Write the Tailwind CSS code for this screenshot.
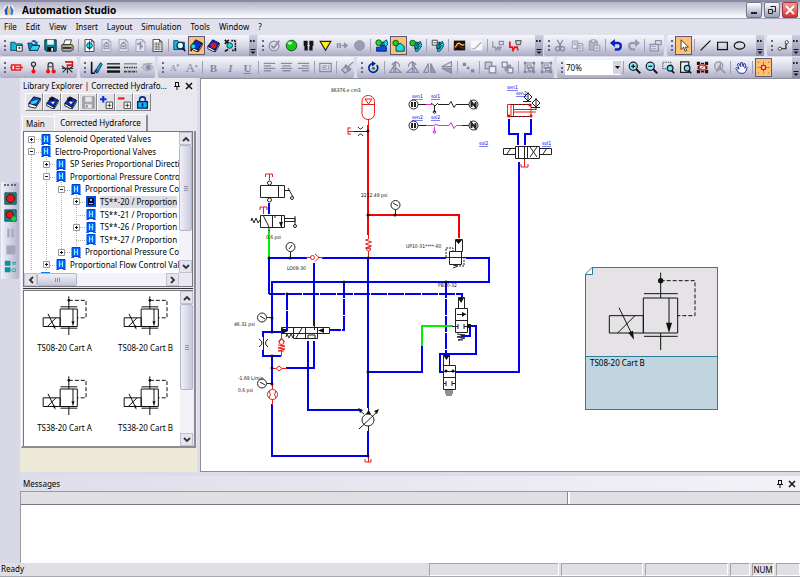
<!DOCTYPE html>
<html lang="en">
<head>
    <meta charset="UTF-8">
    <meta name="viewport" content="width=device-width, initial-scale=1.0">
    <title>Automation Studio</title>
    <script src="https://cdn.jsdelivr.net/npm/@tailwindcss/browser@4"></script>
</head>
<body class="h-screen flex flex-col overflow-hidden bg-[#dcdcea] font-['Noto_Sans','DejaVu_Sans',sans-serif] text-[8px] leading-3 text-black">

    <!-- icon sheet, all on a 16px grid -->
    <svg class="hidden">
        <defs>
            <g id="page"><path d="M2.500 .5h8l3 3v12h-11z" fill="#fff" stroke="#222"/><path d="M10.500 .5v3h3" fill="none" stroke="#222"/></g>
            <g id="pageOff"><path d="M2.500 .5h8l3 3v12h-11z" fill="#e4e4ef" stroke="#9a9ab2"/><path d="M10.500 .5v3h3" fill="none" stroke="#9a9ab2"/></g>
            <g id="book"><path d="M1 9 7 1l8 4-5 9z" fill="#0a2fd0" stroke="#001" /><path d="M1 9v3l8 4 1-2zM10 14l5-9v3l-5 8" fill="#fff" stroke="#001"/></g>
        </defs>
        <symbol id="i-new" viewBox="0 0 16 16"><path d="M1 4h5l1 2h8v8H1z" fill="#12b9dc" stroke="#035"/><path d="M8 8h7v7H8z" fill="#fff" stroke="#222"/><path d="M10 11h3M11.500 9.500v3" stroke="#222"/></symbol>
        <symbol id="i-open" viewBox="0 0 16 16"><path d="M1 5h5l1 2h6v7H3z" fill="#0b8ec8" stroke="#024"/><path d="M3 14l3-6h10l-3 6z" fill="#27dcf2" stroke="#024"/><path d="M5 4c2-4 6-3 7 0l2-1-2 4-3-2 1-1" fill="#0a6cb0"/></symbol>
        <symbol id="i-save" viewBox="0 0 16 16"><path d="M1 1h14v14H3l-2-2z" fill="#0b7f8b" stroke="#012"/><path d="M4 1h8v6H4z" fill="#f2f2f8"/><path d="M4 10h8v5H4z" fill="#111"/><path d="M9 11h2v4H9z" fill="#fff"/></symbol>
        <symbol id="i-print" viewBox="0 0 16 16"><path d="M5 1h8l-2 6H3z" fill="#fff" stroke="#222"/><path d="M1 7h13l1 2v4l-3 2H2l-1-2z" fill="#a9a9a9" stroke="#222"/><path d="M2 11h11" stroke="#222" stroke-width="2"/><path d="M9 9h3" stroke="#fd0"/></symbol>
        <symbol id="i-doc" viewBox="0 0 16 16"><use href="#page"/><circle cx="8" cy="8" r="3.500" fill="#0de4ea" stroke="#034"/><path d="M8 2v12M6 11h4" stroke="#034"/></symbol>
        <symbol id="i-docOff" viewBox="0 0 16 16"><use href="#pageOff"/><path d="M5 12V7l3-3 3 3v5z" fill="none" stroke="#8e8ea8" stroke-width="1.500"/><circle cx="8" cy="9" r="1.500" fill="#8e8ea8"/></symbol>
        <symbol id="i-docOff2" viewBox="0 0 16 16"><use href="#pageOff"/><path d="M8 3v10M4 6h4M8 9h3" stroke="#8e8ea8" stroke-width="2"/></symbol>
        <symbol id="i-sheet" viewBox="0 0 16 16"><use href="#page"/><path d="M4 5h8M4 7h8M4 9h8M4 11h8M4 13h8M6.500 4v10M9.500 4v10" stroke="#777"/></symbol>
        <symbol id="i-find" viewBox="0 0 16 16"><path d="M1 2h5l1 2h7v9H1z" fill="#14b8e0" stroke="#036"/><circle cx="9" cy="8" r="4" fill="#dff" stroke="#124" stroke-width="1.500"/><path d="M12 11l3 4" stroke="#113" stroke-width="2"/></symbol>
        <symbol id="i-book" viewBox="0 0 16 16"><use href="#book"/><circle cx="4" cy="9" r="3" fill="#1ce0e8" stroke="#034"/><path d="M2 12l-1 3" stroke="#111" stroke-width="2"/></symbol>
        <symbol id="i-bookRed" viewBox="0 0 16 16"><use href="#book"/><circle cx="8" cy="8" r="3.500" fill="#e11"/></symbol>
        <symbol id="i-bookCyan" viewBox="0 0 16 16"><path d="M1 9 7 1l8 2-5 9z" fill="#0c49d8" stroke="#001"/><path d="M4 7 13 4l-3 5-7 1z" fill="#1ee0f0"/><path d="M1 9v4l8 2 6-9V3l-5 9z" fill="#fff" stroke="#001"/></symbol>
        <symbol id="i-bookDown" viewBox="0 0 16 16"><use href="#book"/><path d="M4 2h6v4H4z" fill="#111"/><path d="M6 7h5l-2.500 3z" fill="#fff"/></symbol>
        <symbol id="i-var" viewBox="0 0 16 16"><path d="M1 1l5 5M6 1 1 6M5 13l-4 2" stroke="#111" stroke-width="2"/><circle cx="7" cy="8" r="3.500" fill="#15dfd8" stroke="#022"/><path d="M9 2h6M14 2v13M10 14h5" stroke="#111" stroke-width="2" stroke-dasharray="2 1"/></symbol>
        <symbol id="i-check" viewBox="0 0 16 16"><circle cx="7.500" cy="8.500" r="6" fill="#dcdce8" stroke="#8e8ea6" stroke-width="1.500"/><path d="M4 8l3 3 7-9" fill="none" stroke="#85859f" stroke-width="2"/></symbol>
        <symbol id="i-ball" viewBox="0 0 16 16"><circle cx="8" cy="8" r="6.500" fill="#12c81c" stroke="#04400a"/><ellipse cx="6" cy="5" rx="3" ry="2" fill="#aaffa0"/></symbol>
        <symbol id="i-ballOff" viewBox="0 0 16 16"><circle cx="8" cy="8" r="6" fill="#9c9cb4" stroke="#85859f"/></symbol>
        <symbol id="i-pause" viewBox="0 0 16 16"><path d="M2 2h5v5l-1 1 1 1v5H3V9L2 8zM9 2h5v6l-1 1v5H9V9l1-1-1-1z" fill="#151515"/></symbol>
        <symbol id="i-tri" viewBox="0 0 16 16"><path d="M1.500 3h13L8 14z" fill="#ffef17" stroke="#222" stroke-width="1.500"/></symbol>
        <symbol id="i-step" viewBox="0 0 16 16"><path d="M1 5h2v6H1zM4 5h2v6H4zM7 7h3V4l5 4-5 4V9H7z" fill="#8e8ea8"/></symbol>
        <symbol id="i-simBlue" viewBox="0 0 16 16"><path d="M7 4h4v6H7zM9 5l5-4 2 5-5 6H8z" fill="#18dfe6" stroke="#023"/><path d="M2 10h4l2-2h4l2 2v5H2z" fill="#0b4ae0" stroke="#015"/><circle cx="4.500" cy="4.500" r="3.500" fill="#25d92c" stroke="#041"/></symbol>
        <symbol id="i-simOne" viewBox="0 0 16 16"><path d="M5 15V9l5-4 5 4v6z" fill="#18dfe6" stroke="#023"/><circle cx="4.500" cy="5" r="3.500" fill="#25c92c" stroke="#041"/></symbol>
        <symbol id="i-simMany" viewBox="0 0 16 16"><path d="M7 4h4v8H7zM9 6l5-3 2 5-5 7H8z" fill="#18dfe6" stroke="#023"/><path d="M10 8l4-3M10 11l4-3" stroke="#023"/><circle cx="4.500" cy="5" r="3.500" fill="#25c92c" stroke="#041"/></symbol>
        <symbol id="i-boxMany" viewBox="0 0 16 16"><path d="M7 4h4v8H7zM9 6l5-3 2 5-5 7H8z" fill="#18dfe6" stroke="#023"/><path d="M10 8l4-3M10 11l4-3" stroke="#023"/><path d="M1.500 1.500h6v6h-6z" fill="#fff" stroke="#222"/><path d="M3 4.500h3" stroke="#222"/></symbol>
        <symbol id="i-scope" viewBox="0 0 16 16"><path d="M1 2h14v12H1z" fill="#111"/><path d="M2 10c3 0 2-5 5-5s2 4 7 2" fill="none" stroke="#fd0" stroke-width="1.500"/><path d="M2 12l5-5 3 4h4" fill="none" stroke="#e22"/></symbol>
        <symbol id="i-graph" viewBox="0 0 16 16"><path d="M1 2h14v12H1z" fill="#f8f8fc"/><path d="M2 12h4l8-8" fill="none" stroke="#aaa" stroke-width="1.500"/></symbol>
        <symbol id="i-probeOff" viewBox="0 0 16 16"><path d="M1 3v7h3l1 4 2-4h5M7 10l2 4 2-4M9 3h5v4H9z" fill="none" stroke="#9090aa" stroke-width="1.500"/></symbol>
        <symbol id="i-probe" viewBox="0 0 16 16"><path d="M1 3v7h3l1 4 2-4h3l1 4" fill="none" stroke="#e11" stroke-width="2"/><path d="M8 2h7l-1 5H9z" fill="#ccc" stroke="#333"/></symbol>
        <symbol id="i-cut" viewBox="0 0 16 16"><path d="M4 1l5 9M11 1 6 10" stroke="#8585a0" stroke-width="1.500"/><circle cx="4.500" cy="12" r="2.500" fill="none" stroke="#8585a0" stroke-width="1.500"/><circle cx="10.500" cy="12" r="2.500" fill="none" stroke="#8585a0" stroke-width="1.500"/></symbol>
        <symbol id="i-copy" viewBox="0 0 16 16"><path d="M1.500 2.500h7v9h-7zM7.500 5.500h7v9h-7z" fill="#e6e6f0" stroke="#8e8ea8"/><path d="M9 8h4M9 10h4M9 12h4M3 5h4M3 7h3" stroke="#8e8ea8"/></symbol>
        <symbol id="i-paste" viewBox="0 0 16 16"><path d="M1.500 2.500h10v11h-10z" fill="#b5b5c8" stroke="#8e8ea8"/><path d="M4 1h5v3H4zM7.500 7.500h7v7h-7z" fill="#e6e6f0" stroke="#8e8ea8"/><path d="M9 10h4M9 12h4" stroke="#8e8ea8"/></symbol>
        <symbol id="i-undo" viewBox="0 0 16 16"><path d="M4 5h6c5 0 4 8-1 8H6" fill="none" stroke="#0a22b8" stroke-width="3"/><path d="M0 5l6-5v10z" fill="#0a22b8"/></symbol>
        <symbol id="i-redo" viewBox="0 0 16 16"><path d="M12 5H6c-5 0-4 8 1 8h3" fill="none" stroke="#9a9ab0" stroke-width="3"/><path d="M16 5l-6-5v10z" fill="#9a9ab0"/></symbol>
        <symbol id="i-props" viewBox="0 0 16 16"><path d="M1.500 6.500h10v8h-10zM8 6V2h7v5h-3" fill="#e0e0ec" stroke="#8e8ea8" stroke-width="1.500"/><path d="M3 9h6M3 12h6" stroke="#8e8ea8"/></symbol>
        <symbol id="i-arrow" viewBox="0 0 16 16"><path d="M5 1v12l3-3 2 5 2-1-2-4h4z" fill="#fff" stroke="#222"/></symbol>
        <symbol id="i-line" viewBox="0 0 16 16"><path d="M2 14 14 2" stroke="#111" stroke-width="1.500"/></symbol>
        <symbol id="i-rect" viewBox="0 0 16 16"><path d="M2 4h12v9H2z" fill="none" stroke="#111" stroke-width="1.500"/></symbol>
        <symbol id="i-oval" viewBox="0 0 16 16"><ellipse cx="8" cy="8" rx="6.500" ry="4.500" fill="none" stroke="#111" stroke-width="1.500"/></symbol>
        <symbol id="i-link" viewBox="0 0 16 16"><path d="M5 12h6V5" fill="none" stroke="#222" stroke-width="1.500"/><circle cx="3.500" cy="12" r="2" fill="#fff" stroke="#222"/><circle cx="12" cy="4" r="2" fill="#fff" stroke="#222"/></symbol>
        <symbol id="i-cyl" viewBox="0 0 16 16"><path d="M2 5h11v6H2zM6 5v6M6 8h10M0 8h2" fill="#fff" stroke="#f01818" stroke-width="1.700"/></symbol>
        <symbol id="i-pin" viewBox="0 0 16 16"><circle cx="8" cy="4" r="2.500" fill="none" stroke="#333" stroke-width="1.500"/><path d="M8 6v6" stroke="#333" stroke-width="1.500"/><circle cx="8" cy="13" r="2.500" fill="#f01010"/></symbol>
        <symbol id="i-pins" viewBox="0 0 16 16"><path d="M5 13V5c0-4 6-4 6 0v8" fill="none" stroke="#333" stroke-width="1.500"/><path d="M5 7h6" stroke="#333"/><circle cx="5" cy="13" r="2.500" fill="#f01010"/><circle cx="12" cy="13" r="2.500" fill="#f01010"/></symbol>
        <symbol id="i-spider" viewBox="0 0 16 16"><path d="M5 1h9v4H8v3" fill="none" stroke="#f01010" stroke-width="2"/><path d="M1 9h14M2 14l5-5M14 14l-5-5M8 8v7M1 6l4 3M15 6l-4 3" stroke="#333" stroke-width="1.500"/></symbol>
        <symbol id="i-pen" viewBox="0 0 16 16"><path d="M2 1v14h4" fill="none" stroke="#111" stroke-width="2"/><path d="M6 13 13 2l2 2-6 11z" fill="#10b5c9" stroke="#023"/><path d="M4 15l3-5 3 2z" fill="#1028c0"/></symbol>
        <symbol id="i-weights" viewBox="0 0 16 16"><path d="M0 3.500h16" stroke="#111" stroke-width="1.500"/><path d="M0 8h16" stroke="#111" stroke-width="2.500"/><path d="M0 13h16" stroke="#111" stroke-width="3"/></symbol>
        <symbol id="i-dashes" viewBox="0 0 16 16"><path d="M0 3.500h16" stroke="#444"/><path d="M0 8h16" stroke="#333" stroke-width="2" stroke-dasharray="2 1"/><path d="M0 13h16" stroke="#444" stroke-width="2" stroke-dasharray="4 1"/></symbol>
        <symbol id="i-eye" viewBox="0 0 16 16"><path d="M1 8c4-6 10-6 14 0-4 5-10 5-14 0z" fill="#c5c5d5" stroke="#9a9ab2"/><circle cx="9" cy="8" r="3" fill="#8e8ea8"/><path d="M2 4l12-1" stroke="#9a9ab2"/></symbol>
        <symbol id="i-alignL" viewBox="0 0 16 16"><path d="M1 3h14M1 6h9M1 9h14M1 12h9" stroke="#8a8aa4" stroke-width="1.600"/></symbol>
        <symbol id="i-alignC" viewBox="0 0 16 16"><path d="M1 3h14M3 6h10M1 9h14M3 12h10" stroke="#8a8aa4" stroke-width="1.600"/></symbol>
        <symbol id="i-alignR" viewBox="0 0 16 16"><path d="M1 3h14M6 6h9M1 9h14M6 12h9" stroke="#8a8aa4" stroke-width="1.600"/></symbol>
        <symbol id="i-field" viewBox="0 0 16 16"><path d="M1 3h14v10H1z" fill="none" stroke="#8a8aa4" stroke-width="1.500"/><path d="M4 6h6M4 8h4M4 10h6M12 5v6" stroke="#8a8aa4"/></symbol>
        <symbol id="i-brush" viewBox="0 0 16 16"><path d="M15 1 9 7M6 5l6 5-2 2-5-5zM5 7l-4 4 4 4 5-4z" fill="#c2c2d2" stroke="#85859f" stroke-width="1.500"/></symbol>
        <symbol id="i-rotate" viewBox="0 0 16 16"><path d="M7 3a5.500 5.500 0 1 0 5 2" fill="none" stroke="#0a1f9c" stroke-width="2"/><path d="M6 0l5 3-5 4z" fill="#0a1f9c"/><circle cx="8" cy="9" r="2" fill="#1b9c28"/></symbol>
        <symbol id="i-rotL" viewBox="0 0 16 16"><path d="M1 14l5-8v8zM8 14h7L8 8z" fill="none" stroke="#8a8aa4" stroke-width="1.500"/><path d="M6 3c4-3 7 0 7 4M4 4l4-3v5z" fill="none" stroke="#8a8aa4" stroke-width="1.500"/></symbol>
        <symbol id="i-rotR" viewBox="0 0 16 16"><path d="M15 14l-5-8v8zM8 14H1l7-6z" fill="none" stroke="#8a8aa4" stroke-width="1.500"/><path d="M10 3C6 0 3 3 3 7M12 4 8 1v5z" fill="none" stroke="#8a8aa4" stroke-width="1.500"/></symbol>
        <symbol id="i-flipH" viewBox="0 0 16 16"><path d="M1 14 6.500 3v11z" fill="none" stroke="#8a8aa4" stroke-width="1.500"/><path d="M15 14 9.500 3v11z" fill="#9a9ab2" stroke="#8a8aa4" stroke-width="1.500"/></symbol>
        <symbol id="i-flipV" viewBox="0 0 16 16"><path d="M14 1v6L2 7z" fill="none" stroke="#8a8aa4" stroke-width="1.500"/><path d="M14 15V9L2 9z" fill="#9a9ab2" stroke="#8a8aa4" stroke-width="1.500"/></symbol>
        <symbol id="i-nodes" viewBox="0 0 16 16"><path d="M1 2h4v4H1zM6 7h3v3H6zM11 10h4v4h-4z" fill="#85859f"/></symbol>
        <symbol id="i-front" viewBox="0 0 16 16"><path d="M1.500 1.500h8v8h-8z" fill="#c9c9d8" stroke="#85859f" stroke-width="1.500"/><path d="M6.500 6.500h8v8h-8z" fill="#eee" stroke="#85859f" stroke-width="1.500"/></symbol>
        <symbol id="i-back" viewBox="0 0 16 16"><path d="M5 5h7v7H5z" fill="#9a9ab2" stroke="#85859f"/><path d="M1.500 1.500h6v6h-6zM8.500 8.500h6v6h-6z" fill="#eee" stroke="#85859f" stroke-width="1.500"/></symbol>
        <symbol id="i-group" viewBox="0 0 16 16"><path d="M2.500 2.500h11v11h-11zM5 5h5v4H5zM7 8h5v4H7z" fill="none" stroke="#85859f" stroke-width="1.300"/><path d="M1 1h3v3H1zM12 1h3v3h-3zM1 12h3v3H1zM12 12h3v3h-3z" fill="#85859f"/></symbol>
        <symbol id="i-zoomIn" viewBox="0 0 16 16"><circle cx="6.500" cy="6.500" r="5" fill="#8ceef2" stroke="#123" stroke-width="1.500"/><path d="M10 10l5 5" stroke="#111" stroke-width="2.500"/><path d="M4 6.500h5M6.500 4v5" stroke="#112" stroke-width="1.500"/></symbol>
        <symbol id="i-zoomOut" viewBox="0 0 16 16"><circle cx="6.500" cy="6.500" r="5" fill="#8ceef2" stroke="#123" stroke-width="1.500"/><path d="M10 10l5 5" stroke="#111" stroke-width="2.500"/><path d="M4 6.500h5" stroke="#112" stroke-width="1.500"/></symbol>
        <symbol id="i-zoomSel" viewBox="0 0 16 16"><path d="M1 1.500h10v8H1z" fill="none" stroke="#333" stroke-dasharray="2 1"/><circle cx="10" cy="9" r="3.500" fill="#6fe5ea" stroke="#123" stroke-width="1.500"/><path d="M12 12l3 3" stroke="#111" stroke-width="2"/></symbol>
        <symbol id="i-zoomPage" viewBox="0 0 16 16"><path d="M2 1h10v13H2z" fill="#eee" stroke="#222" stroke-width="1.500"/><circle cx="10" cy="9" r="3.500" fill="#6fe5ea" stroke="#123" stroke-width="1.500"/><path d="M12 12l3 3" stroke="#111" stroke-width="2"/></symbol>
        <symbol id="i-zoomAll" viewBox="0 0 16 16"><path d="M1 1h4v4H1zM11 1h4v4h-4zM1 11h4v4H1zM11 11h4v4h-4zM6 2h4v2H6zM6 12h4v2H6zM2 6h2v4H2zM12 6h2v4h-2z" fill="#2a1010"/><path d="M4 5h8v6H4z" fill="#eed" stroke="#c22" stroke-width="1.500"/><path d="M4 11l8-6" stroke="#c22"/></symbol>
        <symbol id="i-zoomOff" viewBox="0 0 16 16"><circle cx="7" cy="6" r="5" fill="#d5d5e2" stroke="#9494ad" stroke-width="1.500"/><path d="M10 10l5 5M4 14l5-9v6" stroke="#9494ad" stroke-width="2" fill="none"/></symbol>
        <symbol id="i-hand" viewBox="0 0 16 16"><path d="M5 15 1 9l1-1 3 2-2-6 2-1 2 4V2h2l1 5 1-4 2 1-1 5 2-2 1 1-2 5-2 2z" fill="#fff" stroke="#1a2f9c" stroke-width="1.200"/></symbol>
        <symbol id="i-snap" viewBox="0 0 16 16"><path d="M1 1h1v1H1zM7.500 1h1v1h-1zM14 1h1v1h-1zM1 7.500h1v1H1zM14 7.500h1v1h-1zM1 14h1v1H1zM7.500 14h1v1h-1zM14 14h1v1h-1z" fill="#a11"/><path d="M8 3v10M3 8h10M5 5l6 6M11 5l-6 6" stroke="#e11"/><circle cx="8" cy="8" r="2.500" fill="#fdd" stroke="#e11" stroke-width="1.500"/></symbol>
        <symbol id="i-saveOff" viewBox="0 0 16 16"><path d="M1 1h14v14H1z" fill="#a8a8a8" stroke="#888"/><path d="M4 1h8v6H4zM4 10h8v5H4z" fill="#e8e8e8"/><path d="M5 11h2v3H5z" fill="#888"/></symbol>
        <symbol id="i-plus" viewBox="0 0 16 16"><path d="M0 4h8M4 0v8" stroke="#0b2ce0" stroke-width="2.500"/><path d="M7.500 7.500h8v8h-8z" fill="#fff" stroke="#222"/><path d="M9 11.500h5M11.500 9v5" stroke="#222"/></symbol>
        <symbol id="i-minus" viewBox="0 0 16 16"><path d="M0 3h8" stroke="#e81515" stroke-width="2.500"/><path d="M7.500 7.500h8v8h-8z" fill="#fff" stroke="#222"/><path d="M9 11.500h5M11.500 9v5" stroke="#222"/></symbol>
        <symbol id="i-lock" viewBox="0 0 16 16"><path d="M4.500 8V4c0-4 7-4 7 0v4" fill="none" stroke="#0a2a8c" stroke-width="2"/><path d="M2 7h12v8H2z" fill="#10b8f0" stroke="#02206c" stroke-width="1.500"/><path d="M8 9v4" stroke="#02206c" stroke-width="2"/></symbol>
        <symbol id="i-valves" viewBox="0 0 10 11"><path d="M1 0h8v10H1zM0 11h3v-1H0zM7 11h3v-1H7z" fill="#0a6cff"/><path d="M1 .5h8v9H1z" fill="none" stroke="#0440d8"/><path d="M3.500 2v6M6.500 2v6M4 5h2" stroke="#8af4ff"/></symbol>
        <symbol id="i-valvesOn" viewBox="0 0 10 11"><path d="M0 0h10v11H0z" fill="#0450e0"/><path d="M2 2h6v7H2z" fill="#0a0a28"/><path d="M4 3h2v2H4zM3 7h4v1H3z" fill="#7ad0ff"/></symbol>
        <symbol id="i-rec" viewBox="0 0 16 16"><path d="M1 1h14v14H1z" fill="#0a8c90" stroke="#044"/><circle cx="8" cy="8" r="5" fill="#f01414" stroke="#500"/></symbol>
        <symbol id="i-recGo" viewBox="0 0 16 16"><path d="M1 1h14v14H1z" fill="#0a8c90" stroke="#044"/><circle cx="7" cy="7" r="4.500" fill="#f01414" stroke="#500"/><circle cx="12" cy="12" r="3" fill="#1fd03a"/></symbol>
        <symbol id="i-bars" viewBox="0 0 16 16"><path d="M4 3h3v11H4zM9 3h3v11H9z" fill="#a9a9c2"/></symbol>
        <symbol id="i-stop" viewBox="0 0 16 16"><path d="M3 3h11v11H3z" fill="#a5a5bf"/></symbol>
        <symbol id="i-tiles" viewBox="0 0 16 16"><path d="M1 1h7v6H1zM1 9h7v6H1z" fill="#0e9298"/><path d="M10 3h5M10 5h5M10 11h4v3h-4z" stroke="#1b8f95" fill="#c7f0f0"/></symbol>
        <symbol id="i-more" viewBox="0 0 8 20"><path d="M1 4l2 1-2 1zM4 4l2 1-2 1z" fill="#111"/><path d="M1.500 4l1 1-1 1M4.500 4l1 1-1 1" fill="none" stroke="#111"/><path d="M1.500 13.500h5" stroke="#111"/><path d="M1.500 15.500h5L4 18z" fill="#111"/></symbol>
        <symbol id="i-cart" viewBox="120 50 270 240">
            <g fill="none" stroke="#111" stroke-width="1">
                <path vector-effect="non-scaling-stroke" d="M127 181h102v52H127zM229 128h103v105H229zM231 115h101M231 243h101M281 52v76M281 233v51M306 128v80M152 233l52-52M156 157l36 74"/>
                <path vector-effect="non-scaling-stroke" d="M281 76h103v105h-52" stroke-dasharray="4 2"/>
            </g>
            <circle cx="281" cy="76" r="8" fill="#111"/>
            <path d="M297 202h18l-9 31zM184 232l14-6 3 27z" fill="#111"/>
        </symbol>
    </svg>

    <header class="flex h-[19px] shrink-0 items-center gap-[7px] border-t-2 border-b border-t-[#8a8aa4] border-b-[#a4a4b8] bg-linear-to-b from-[#b4b4c8] via-[#d8d8e4] to-white pl-[3px] pr-0.5">
        <svg class="size-3" viewBox="0 0 16 16"><circle cx="8" cy="8" r="7.500" fill="#e8eefc"/><path d="M7 1 2 8l1 6 3 1V8z" fill="#2450b8"/><path d="M9 1l5 7-1 6-3 1V8z" fill="#3a78d0"/><path d="M8 2l2 8-2 5-2-5z" fill="#f4c030"/></svg>
        <h1 class="grow text-[10px] font-bold">Automation Studio</h1>
        <div class="flex gap-0.5">
            <button aria-label="Minimize" class="flex h-4 w-4 items-end justify-center rounded-xs border border-[#77778f] bg-linear-to-b from-white to-[#9c9cb8] pb-[3px]"><span class="h-0.5 w-1.5 bg-[#222]"></span></button>
            <button aria-label="Restore" class="flex h-4 w-4 items-center justify-center rounded-xs border border-[#77778f] bg-linear-to-b from-white to-[#9c9cb8]"><svg class="size-2.5" viewBox="0 0 10 10"><path d="M3.500 1.500h5v5h-2M1.500 4.500h4v4h-4z" fill="none" stroke="#222"/></svg></button>
            <button aria-label="Close" class="flex h-4 w-4 items-center justify-center rounded-xs border border-[#a03040] bg-linear-to-b from-[#f09a90] to-[#d03034]"><svg class="size-2.5" viewBox="0 0 10 10"><path d="M1 1l8 8M9 1 1 9" stroke="#fff" stroke-width="1.800"/></svg></button>
        </div>
    </header>

    <nav class="flex h-4 shrink-0 items-center gap-[9px] bg-[#e1e1ed] pl-1">
        <a href="#">File</a><a href="#">Edit</a><a href="#">View</a><a href="#">Insert</a><a href="#">Layout</a><a href="#">Simulation</a><a href="#">Tools</a><a href="#">Window</a><a href="#">?</a>
    </nav>

    <div id="row1" class="flex h-[21px] shrink-0 gap-px"></div>
    <div id="row2" class="mt-px flex h-[21px] shrink-0 gap-[3px]"></div>

    <main class="flex min-h-0 grow">
        <aside class="w-5 shrink-0 bg-[#d8d8e6] pt-[104px]">
            <div id="side" class="mx-px flex flex-col items-center rounded-r-xs bg-linear-to-r from-[#f2f2fa] to-[#b4b4cc] pb-1"></div>
        </aside>

        <div class="flex min-w-0 grow flex-col">
            <div class="flex h-[394px] shrink-0">
                <section class="flex w-[177px] shrink-0 flex-col bg-[#e8e8ee]">
                    <div class="flex h-[15px] shrink-0 items-center gap-1 pl-[3px] pr-1">
                        <h2 class="min-w-0 grow whitespace-nowrap">Library Explorer | Corrected Hydrafo...</h2>
                        <button aria-label="Pin"><svg class="size-2" viewBox="0 0 8 8"><path d="M2.500 0v4M5.500 0v4M2 .5h4M1 4.500h6M4 5v3" stroke="#111"/></svg></button>
                        <button aria-label="Close panel"><svg class="size-2" viewBox="0 0 8 8"><path d="M1 1l6 6M7 1 1 7" stroke="#111" stroke-width="1.500"/></svg></button>
                    </div>
                    <div id="libTools" class="flex h-[18px] shrink-0 pl-[5px]"></div>
                    <div class="flex h-5 shrink-0 items-end pl-0.5 pt-[3px]">
                        <button class="h-[15px] w-8 border-t border-l border-white bg-[#e4e3e8] pl-[3px] text-left">Main</button>
                        <button class="h-[17px] w-[94px] rounded-t-xs border-t border-l border-r-2 border-t-white border-l-white border-r-[#8c8c94] bg-[#ebeaee] text-center">Corrected Hydraforce</button>
                    </div>
                    <div class="mx-px flex h-[317px] shrink-0 flex-col border-r-2 border-b-2 border-l border-[#8c8c94] border-l-white bg-[#e8e8ee] px-px">
                        <div class="grid h-[156px] shrink-0 grid-cols-[1fr_13px] grid-rows-[1fr_13px] border border-[#77777f] bg-white">
                            <div class="relative overflow-hidden pt-px">
                                <svg class="absolute left-0 top-px" width="155" height="140"><path d="M7.500 6v132M22.500 20v118M37.500 45v76M52.500 60v59M8 6.500h10M8 19.500h10M22 31.500h10M22 44.500h10M22 132.500h10M37 57.500h10M37 119.500h10M52 69.500h10M52 82.500h10M52 94.500h10M52 107.500h10M52.500 60v48" fill="none" stroke="#b5b5b5" stroke-dasharray="1 1"/></svg>
                                <ul id="tree" class="relative grid h-[138px] auto-rows-fr"></ul>
                                <span class="absolute bottom-0 left-[17px] h-px w-[9px] bg-[#0a78ff]"></span>
                            </div>
                            <div class="flex flex-col bg-[#f2f2f8]">
                                <button aria-label="Scroll up" class="flex h-[13px] items-center justify-center border border-[#c0c0d4] bg-[#e4e4f0]"><svg class="size-2" viewBox="0 0 8 8"><path d="M1 6l3-3 3 3" fill="none" stroke="#333" stroke-width="1.800"/></svg></button>
                                <span class="flex h-[86px] flex-col items-center justify-center gap-px rounded-xs border border-[#b4b4cc] bg-linear-to-r from-[#f0f0f8] to-[#c8c8dc]"><i class="h-px w-1 bg-[#9090a8]"></i><i class="h-px w-1 bg-[#9090a8]"></i><i class="h-px w-1 bg-[#9090a8]"></i></span>
                                <button aria-label="Scroll down" class="mt-auto flex h-[13px] items-center justify-center border border-[#c0c0d4] bg-[#e4e4f0]"><svg class="size-2" viewBox="0 0 8 8"><path d="M1 2l3 3 3-3" fill="none" stroke="#333" stroke-width="1.800"/></svg></button>
                            </div>
                            <div class="flex bg-[#f2f2f8]">
                                <button aria-label="Scroll left" class="flex w-[13px] items-center justify-center border border-[#c0c0d4] bg-[#e4e4f0]"><svg class="size-2" viewBox="0 0 8 8"><path d="M6 1 3 4l3 3" fill="none" stroke="#333" stroke-width="1.800"/></svg></button>
                                <span class="flex w-10 items-center justify-center gap-px rounded-xs border border-[#b4b4cc] bg-linear-to-b from-[#f0f0f8] to-[#c8c8dc]"><i class="h-1 w-px bg-[#9090a8]"></i><i class="h-1 w-px bg-[#9090a8]"></i><i class="h-1 w-px bg-[#9090a8]"></i></span>
                                <button aria-label="Scroll right" class="ml-auto flex w-[13px] items-center justify-center border border-[#c0c0d4] bg-[#e4e4f0]"><svg class="size-2" viewBox="0 0 8 8"><path d="M2 1l3 3-3 3" fill="none" stroke="#333" stroke-width="1.800"/></svg></button>
                            </div>
                            <div class="bg-[#e8e8ee]"></div>
                        </div>
                        <div class="my-px h-px shrink-0 bg-[#333]"></div>
                        <div class="flex min-h-0 grow border-t border-l border-[#77777f] bg-white">
                            <div class="grid min-w-0 grow grid-cols-[81px_81px] grid-rows-[80px_80px] overflow-hidden">
                                <figure class="flex flex-col items-center gap-1.5 pt-[5px]"><svg class="h-10 w-[45px]"><use href="#i-cart"/></svg><figcaption class="whitespace-nowrap">TS08-20 Cart A</figcaption></figure>
                                <figure class="flex flex-col items-center gap-1.5 pt-[5px]"><svg class="h-10 w-[45px]"><use href="#i-cart"/></svg><figcaption class="whitespace-nowrap">TS08-20 Cart B</figcaption></figure>
                                <figure class="flex flex-col items-center gap-1.5 pt-[5px]"><svg class="h-10 w-[45px]"><use href="#i-cart"/></svg><figcaption class="whitespace-nowrap">TS38-20 Cart A</figcaption></figure>
                                <figure class="flex flex-col items-center gap-1.5 pt-[5px]"><svg class="h-10 w-[45px]"><use href="#i-cart"/></svg><figcaption class="whitespace-nowrap">TS38-20 Cart B</figcaption></figure>
                            </div>
                            <div class="flex w-[13px] shrink-0 flex-col bg-[#f2f2f8]">
                                <button aria-label="Scroll up" class="flex h-[13px] items-center justify-center border border-[#c0c0d4] bg-[#e4e4f0]"><svg class="size-2" viewBox="0 0 8 8"><path d="M1 6l3-3 3 3" fill="none" stroke="#333" stroke-width="1.800"/></svg></button>
                                <span class="flex h-[86px] flex-col items-center justify-center gap-px rounded-xs border border-[#b4b4cc] bg-linear-to-r from-[#f0f0f8] to-[#c8c8dc]"><i class="h-px w-1 bg-[#9090a8]"></i><i class="h-px w-1 bg-[#9090a8]"></i><i class="h-px w-1 bg-[#9090a8]"></i></span>
                                <button aria-label="Scroll down" class="mt-auto flex h-[13px] items-center justify-center border border-[#c0c0d4] bg-[#e4e4f0]"><svg class="size-2" viewBox="0 0 8 8"><path d="M1 2l3 3 3-3" fill="none" stroke="#333" stroke-width="1.800"/></svg></button>
                            </div>
                        </div>
                    </div>
                    <div class="grow bg-[#ece9d8]"></div>
                </section>

                <section class="relative ml-[3px] grow overflow-hidden border-t border-l border-b border-[#8e8e98] bg-white">
                    <!-- hydraulic circuit, drawn in window coordinates -->
                    <svg class="absolute left-0 top-0 font-['DejaVu_Sans_Condensed','DejaVu_Sans',sans-serif] text-[5px]" width="600" height="392" viewBox="201 79 600 392">
                        <g fill="none" stroke="#0000f5" stroke-width="2">
                            <path d="M269 203v11M269 257v37M269 258h38M322 258h124M466 258h23v24H272v50M314 263v63M314 341v27h-28M368 258v150M308 341v69h52M263 337v-5h18M263 350v6h18M272 356v28M272 404v52h96v-25M368 372h54v-26M509 119v15h9v11M531 119v15h-6v11M519 162v210h-63M470 326h6v28h-36v18h4M470 326v10h-9"/>
                            <path d="M269 294h193v5M287 294v36h-6M344 282v48h-14M446 282v73" stroke-dasharray="16 1"/>
                            <path d="M269 230v27M422 346v-20h31" stroke="#00f000"/>
                            <path d="M368 125v110M368 215h91v23" stroke="#fa0000"/>
                        </g>
                        <g fill="none" stroke="#e81c1c" stroke-width="1">
                            <rect x="362" y="95.500" width="12.500" height="24" rx="6"/><path d="M362 104.500h12.500M365 99h7l-3.500 5zM368.500 119v7M348 127.500v7M348 128h3M348 134h3M348 131.500h7"/>
                            <path d="M265.500 177v-3h7v3M269.500 174v6M260 210v-3h7v3M263.500 207v7"/>
                            <path d="M368.500 235v4l-3 1 6 2-6 2 6 2-6 2 5 1M368.500 251v6"/><circle cx="368.500" cy="249" r="2"/>
                            <path d="M306 257.500h5M315 254l4 3.500-4 4M318 257.500h5"/><circle cx="312.500" cy="257.500" r="2"/>
                            <path d="M281.500 332v7l-3 3 3-4 3 4M278 345l7 1-7 2 7 1-7 2h6M281.500 350v6"/><circle cx="281.500" cy="342" r="2.500"/>
                            <path d="M272 368.500h4l3-2.500 3 2.500-3 2.500-3-2.500M282 368.500h5M272.500 383v6M272.500 399v6M269 391q3 3.500 0 7M276 391q-3 3.500 0 7"/><circle cx="272.500" cy="394.500" r="5"/>
                            <path d="M365 459v3h6v-3M368.500 456v6M521 164v3h7v-3M524.500 160v7"/>
                            <path d="M507.500 104.500h23.500v12h-23.500zM511 104v13M513.500 104v13M514 109.500h22M514 112h22"/>
                        </g>
                        <g fill="none" stroke="#222" stroke-width="1">
                            <path d="M354 131.500h14M358 127q2.500 4 5 0M358 136q2.500-4 5 0"/>
                            <path d="M260.500 185.500h24v12h-24zM278.500 185v12M285 190.500h5M288 188l5 9M260.500 215.500h24v12h-24zM272.500 215v12M263 215l6 12M281.500 215v12M275 215v3M269 227v4M251 221l1-3 2 5 2-5 2 5 2-3M285 218.500h10v3h-10M295 216v9"/>
                            <circle cx="269.500" cy="183" r="2"/><circle cx="269.500" cy="200" r="2"/><circle cx="292" cy="198" r="1.500"/><circle cx="295" cy="226" r="1.500"/>
                            <circle cx="290.500" cy="247" r="4.500"/><path d="M290.500 252v6M289 249l3-4"/>
                            <circle cx="395.500" cy="205" r="4.500"/><path d="M395.500 210v5M398 206l-5-3"/>
                            <circle cx="262" cy="317.500" r="4.500"/><path d="M267 317.500h5M260 316l5 3"/>
                            <circle cx="262" cy="383.500" r="4.500"/><path d="M267 383.500h5M260 382l5 3"/>
                            <path d="M281.500 327.500h48v6h-48zM293.500 327.500h24v11h-24zM305.500 327v11M296 338l6-10M308 338v-3h7v3M314.500 320v10M286 337l1-3 2 4 2-4 2 4 1-3"/>
                            <path d="M259 339q6 4 0 8M268 339q-5 4 0 8M263.500 337v13"/>
                            <circle cx="368" cy="420" r="6"/><path d="M359 429l18-17M368.500 407v7M368.500 426v5M359 410l5 4"/>
                            <path d="M458.500 297.500h6v11h-6zM455.500 308.500h12v24h-12zM455 320.500h12M457 314.500h9M452 326.500h6M458 324v5M464 324v5M464 326.500h7M457 334l8 1-8 2 8 1-7 2h5"/>
                            <path d="M443.500 355.500h6v10h-6zM443.500 365.500h12v24h-12zM443 377.500h12M443 371.500h12M443 383.500h3M446 381v5M452 381v5M452 383.500h3M445 391h8M445 393h8M446 395h6"/>
                            <path d="M455.500 239.500h7v12h-7zM449.500 251.500h12v13h-12zM445 257.500h22M453 265l5 1-5 2"/><path d="M446 257v-9h7v4M464 257v9h-6" stroke-dasharray="2 1"/>
                            <path d="M515.500 146.500h24v12h-24zM527.500 146v12M518.500 146v12M524.500 146v14M530 157l7-10M530 147l7 10M503.500 148.500h12v6h-12zM539.500 148.500h12v6h-12zM507 154l4-6M543 154l4-6"/>
                            <path d="M524 97l4-4 4 4-4 4zM523 101.500h8M528 92v10M532 103l4-4 4 4-4 4zM531 107.500h9M536 98v12"/><path d="M511 104.500h20M511 116.500h18" stroke-dasharray="3 1"/>
                            <circle cx="413.500" cy="104.500" r="4.500"/><circle cx="473.500" cy="104.500" r="4.500"/><circle cx="413.500" cy="125.500" r="4.500"/><circle cx="473.500" cy="125.500" r="4.500"/>
                            <path d="M412 102v5M415 102v5M471.500 107v-5l4 5v-5M412 123v5M415 123v5M471.500 128v-5l4 5v-5" stroke-width="2"/>
                            <path d="M418 104.500h8M431 103l4 3 3-3M438 104.500h11l2-3 3 6 2-3h13M434.500 106v6M418 125.500h8M462 125.500h7"/>
                            <circle cx="434.500" cy="112" r="1.300"/>
                        </g>
                        <path d="M426 104.500h6M426 125.500h8l2-1 3 1h10l2-3 3 6 2-3M434.500 127v5" fill="none" stroke="#f020f0"/><circle cx="434.500" cy="132" r="1.300" fill="none" stroke="#f020f0"/>
                        <path d="M456 125.500h6" stroke="#00c800"/>
                        <g fill="#111">
                            <path d="M282 328l6 3-6 3zM324 328v5l-6-2.500zM458 298h6l-3 5zM443 355h7l-3.500 5zM455 240h7l-3.500 4zM374 411l5-2-2 5zM358 408l5 2-3 3zM366 414h5l-2.500-4zM279 222h4l-2 5zM462 312l4 2-4 3zM467 324h4v4h-4z"/>
                            <circle cx="269" cy="258" r="1.500"/><circle cx="290" cy="258" r="1.500"/><circle cx="368" cy="258" r="1.500"/><circle cx="368" cy="131" r="1.500"/><circle cx="368" cy="215" r="1.500"/><circle cx="395" cy="215" r="1.500"/><circle cx="344" cy="282" r="1.500"/><circle cx="446" cy="282" r="1.500"/><circle cx="287" cy="294" r="1.500"/><circle cx="272" cy="318" r="1.500"/><circle cx="272" cy="332" r="1.500"/><circle cx="272" cy="356" r="1.500"/><circle cx="272" cy="368" r="1.500"/><circle cx="272" cy="384" r="1.500"/><circle cx="368" cy="372" r="1.500"/><circle cx="368" cy="456" r="1.500"/><circle cx="446" cy="371" r="1.500"/><circle cx="453" cy="371" r="1.500"/>
                            <text x="331" y="92">86376.e cm3</text><text x="361" y="197">2212.49 psi</text><text x="266" y="239">0.6 psi</text><text x="287" y="270">LO08-30</text><text x="406" y="248">UP10-31****-60</text><text x="438" y="287">PB10-32</text><text x="234" y="326">46.31 psi</text><text x="238" y="380">-1.69 L/min</text><text x="238" y="392">0.6 psi</text>
                        </g>
                        <circle cx="509" cy="116" r="1.500" fill="#e00"/><circle cx="531" cy="116" r="1.500" fill="#e00"/><circle cx="530" cy="105" r="1.500" fill="#e00"/>
                        <g fill="#0000dc" text-decoration="underline">
                            <text x="412" y="98">sen1</text><text x="431" y="98">sol1</text><text x="412" y="119">sen2</text><text x="431" y="119">sol2</text><text x="507" y="89">sen1</text><text x="516" y="95">sen2</text><text x="479" y="145">sol2</text><text x="542" y="145">sol1</text>
                        </g>
                    </svg>

                    <div class="absolute left-[384px] top-[188px] w-[133px] border border-[#2e7c9c] bg-[#c0d5de]">
                        <div class="relative flex h-[89px] justify-center border-b border-[#2e7c9c] bg-[#e5e3e6] pt-1">
                            <svg class="absolute -left-px -top-px size-2" viewBox="0 0 8 8"><path d="M0 0h8L0 8z" fill="#fff"/><path d="M7.500 0v7.500H0z" fill="#fff" stroke="#2e7c9c"/></svg>
                            <svg class="h-20 w-[90px]"><use href="#i-cart"/></svg>
                        </div>
                        <p class="h-[52px] pl-1">TS08-20 Cart B</p>
                    </div>
                </section>
            </div>

            <section class="mt-1 flex min-h-0 grow flex-col">
                <div class="flex h-[15px] shrink-0 items-center gap-1 bg-linear-to-r from-[#dedeeb] to-[#f2f2f7] pl-[3px] pr-1">
                    <h2 class="grow">Messages</h2>
                    <button aria-label="Pin"><svg class="size-2" viewBox="0 0 8 8"><path d="M2.500 0v4M5.500 0v4M2 .5h4M1 4.500h6M4 5v3" stroke="#111"/></svg></button>
                    <button aria-label="Close messages"><svg class="size-2" viewBox="0 0 8 8"><path d="M1 1l6 6M7 1 1 7" stroke="#111" stroke-width="1.500"/></svg></button>
                </div>
                <div class="flex grow flex-col border-l border-t border-[#9a9aa4] bg-white">
                    <div class="flex h-[13px] shrink-0 border-b border-[#77777c] bg-[#e0dfe3]">
                        <span class="w-[547px] border-r border-[#88888e]"></span>
                        <span class="grow border-l-2 border-white"></span>
                    </div>
                </div>
            </section>
        </div>
    </main>

    <footer class="flex h-[14px] shrink-0 items-stretch gap-0.5 border-b border-[#a8a8b4] bg-[#e0dfe3]">
        <span class="grow pl-px">Ready</span>
        <span class="w-[130px] border border-[#a4a4a8] border-r-white border-b-white"></span>
        <span class="w-[82px] border border-[#a4a4a8] border-r-white border-b-white"></span>
        <span class="w-[83px] border border-[#a4a4a8] border-r-white border-b-white"></span>
        <span class="w-5 border border-[#a4a4a8] border-r-white border-b-white"></span>
        <span class="w-[22px] border border-[#a4a4a8] border-r-white border-b-white text-center">NUM</span>
        <span class="w-6 border border-[#a4a4a8] border-r-white border-b-white"></span>
    </footer>

    <script>
        // "|" is a separator, "*" marks a pressed button, ">" is the overflow chevron, "T:" is a letter button
        const row1 = [
            "new open save print | doc docOff docOff docOff2 sheet | find *book bookRed var >",
            "check ball pause tri step ballOff | simBlue *simOne simMany | boxMany | scope graph | probeOff probe >",
            "cut copy paste | undo redo | props",
            "*arrow | line rect oval >",
            "link >"
        ];
        const row2 = [
            "cyl pin pins spider",
            "pen weights dashes eye",
            "T:a T:A | T:B T:I T:U | alignL alignC alignR | field | brush",
            "rotate | rotL rotR flipH flipV | nodes | front back | group group",
            "ZOOM | zoomIn zoomOut zoomSel zoomPage zoomAll zoomOff | hand | *snap >"
        ];
        const letters = {
            "T:a": '<span class="font-[Liberation_Serif] text-[9px]">A</span><sup class="text-[5px]">▾</sup>',
            "T:A": '<span class="font-[Liberation_Serif] text-[13px]">A</span><sup class="text-[5px]">▴</sup>',
            "T:B": '<b class="font-[Liberation_Serif] text-[11px]">B</b>',
            "T:I": '<b class="font-[Liberation_Serif] text-[11px] italic">I</b>',
            "T:U": '<b class="font-[Liberation_Serif] text-[11px] underline">U</b>'
        };
        const zoomBox = `<div class="relative flex w-14 items-center">
            <select aria-label="Zoom" class="h-[15px] w-full appearance-none bg-white pl-px text-[8px] leading-3"><option>70%</option></select>
            <span class="pointer-events-none absolute right-0 flex h-[13px] w-2 items-center justify-center bg-[#d4d4e2]"><svg class="h-1 w-1.5" viewBox="0 0 6 4"><path d="M1 0h5L3.500 3z" fill="#111"/></svg></span>
        </div>`;

        function icon(name) {
            return `<svg class="size-[13px]"><use href="#i-${name}"/></svg>`;
        }

        function item(t) {
            if (t === "|") return '<span class="my-1 ml-0.5 mr-0.5 w-px shrink-0 bg-[#a0a0b8]"></span>';
            if (t === ">") return '<button aria-label="More buttons" class="ml-auto w-2 shrink-0 bg-linear-to-b from-[#d0d0e0] to-[#8c8ca8]"><svg class="h-5 w-2"><use href="#i-more"/></svg></button>';
            if (t === "ZOOM") return zoomBox;
            if (letters[t]) return `<button aria-label="${t.slice(2)}" class="flex w-[17px] shrink-0 items-center justify-center text-[#8585a0]">${letters[t]}</button>`;
            if (t[0] === "*") return `<button aria-label="${t.slice(1)}" class="my-px flex w-[17px] shrink-0 items-center justify-center border border-[#5a5a78] bg-[#fcc272]">${icon(t.slice(1))}</button>`;
            return `<button aria-label="${t}" class="flex w-[17px] shrink-0 items-center justify-center">${icon(t)}</button>`;
        }

        function bar(def, extra) {
            return `<div class="flex ${extra} rounded-xs bg-linear-to-b from-[#f6f6fc] via-[#dadae8] to-[#acacc6] pl-1">
                <span class="my-[5px] mr-0.5 w-0 shrink-0 border-l-2 border-dotted border-[#666684]"></span>${def.split(" ").map(item).join("")}</div>`;
        }

        const pads1 = ["w-[257px] shrink-0", "w-[285px] shrink-0", "w-[120px] shrink-0", "ml-0.5 w-[97px] shrink-0", "ml-0.5 grow"];
        const pads2 = ["w-[77px] shrink-0", "w-[75px] shrink-0", "w-[196px] shrink-0", "w-[197px] shrink-0", "grow"];
        document.getElementById("row1").innerHTML = row1.map((d, i) => bar(d, pads1[i])).join("");
        document.getElementById("row2").innerHTML = row2.map((d, i) => bar(d, pads2[i])).join("");

        document.getElementById("side").innerHTML = '<span class="mb-1 mt-0.5 w-3 border-t-2 border-dotted border-[#666684]"></span>' +
            ["rec", "recGo", "bars", "stop", "tiles"].map(n => `<button aria-label="${n}" class="flex h-[17px] w-[17px] items-center justify-center">${icon(n)}</button>`).join("");

        document.getElementById("libTools").innerHTML = ["bookCyan", "bookDown", "bookDown", "saveOff", "plus", "minus", "lock"]
            .map(n => `<button aria-label="${n}" class="flex w-[18px] items-center justify-center border border-white border-r-[#85858c] border-b-[#85858c] bg-[#e2e1e6]">${icon(n)}</button>`).join("");

        // level, expander, label
        const nodes = [
            [0, "+", "Solenoid Operated Valves"],
            [0, "-", "Electro-Proportional Valves"],
            [1, "+", "SP Series Proportional Directi"],
            [1, "-", "Proportional Pressure Contro"],
            [2, "-", "Proportional Pressure Co"],
            [3, "+", "TS**-20 / Proportion"],
            [3, "", "TS**-21 / Proportion"],
            [3, "+", "TS**-26 / Proportion"],
            [3, "", "TS**-27 / Proportion"],
            [2, "+", "Proportional Pressure Co"],
            [1, "+", "Proportional Flow Control Val"]
        ];
        document.getElementById("tree").innerHTML = nodes.map(([level, mark, label], i) => `
            <li class="flex items-center whitespace-nowrap" style="padding-left:${level * 15 + 4}px">
                <svg class="size-[7px] shrink-0" viewBox="0 0 7 7">${mark ? `<path d="M.5 .5h6v6h-6z" fill="#fff" stroke="#999"/><path d="M2 3.500h3${mark === "+" ? "M3.500 2v3" : ""}" stroke="#111"/>` : ""}</svg>
                <svg class="ml-1.5 h-[11px] w-2.5 shrink-0"><use href="#i-valves${i === 5 ? "On" : ""}"/></svg>
                <span class="ml-1 ${i === 5 ? "bg-[#dcdce2]" : ""}">${label}</span>
            </li>`).join("");
    </script>
</body>
</html>
